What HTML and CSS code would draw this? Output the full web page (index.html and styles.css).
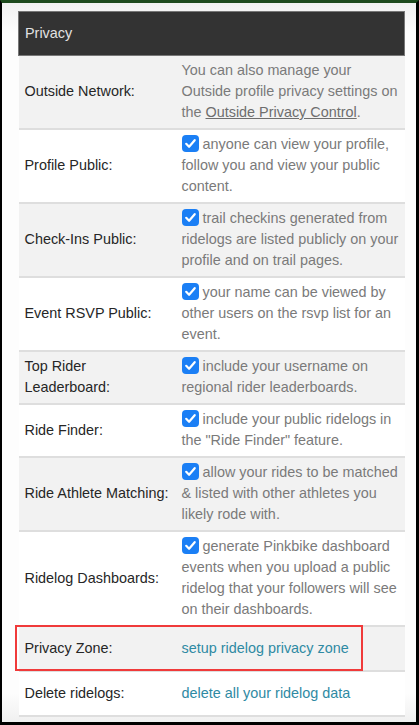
FILE: index.html
```html
<!DOCTYPE html>
<html lang="en">
<head>
  <meta charset="UTF-8" />
  <meta name="viewport" content="width=device-width, initial-scale=1.0"/>
  <title>Privacy settings</title>
  <link rel="stylesheet" href="styles.css">
</head>
<body>

  <div class="frame">
    <table class="privacy">
      <colgroup>
        <col class="col-label">
        <col>
      </colgroup>
      <thead>
        <tr>
          <th colspan="2">Privacy</th>
        </tr>
      </thead>
      <tbody>
        <tr>
          <td class="label">Outside Network:</td>
          <td class="value">You can also manage your Outside profile privacy settings on the <a href="#" class="plain">Outside Privacy Control</a>.</td>
        </tr>
        <tr>
          <td class="label">Profile Public:</td>
          <td class="value"><span class="check"><svg viewBox="0 0 17 17"><path d="M4.2 8.8l2.9 3 5.6-6.6" /></svg></span> anyone can view your profile, follow you and view your public content.</td>
        </tr>
        <tr>
          <td class="label">Check-Ins Public:</td>
          <td class="value"><span class="check"><svg viewBox="0 0 17 17"><path d="M4.2 8.8l2.9 3 5.6-6.6" /></svg></span> trail checkins generated from ridelogs are listed publicly on your profile and on trail pages.</td>
        </tr>
        <tr>
          <td class="label">Event RSVP Public:</td>
          <td class="value"><span class="check"><svg viewBox="0 0 17 17"><path d="M4.2 8.8l2.9 3 5.6-6.6" /></svg></span> your name can be viewed by other users on the rsvp list for an event.</td>
        </tr>
        <tr>
          <td class="label">Top Rider Leaderboard:</td>
          <td class="value"><span class="check"><svg viewBox="0 0 17 17"><path d="M4.2 8.8l2.9 3 5.6-6.6" /></svg></span> include your username on regional rider leaderboards.</td>
        </tr>
        <tr>
          <td class="label">Ride Finder:</td>
          <td class="value"><span class="check"><svg viewBox="0 0 17 17"><path d="M4.2 8.8l2.9 3 5.6-6.6" /></svg></span> include your public ridelogs in the "Ride Finder" feature.</td>
        </tr>
        <tr>
          <td class="label">Ride Athlete Matching:</td>
          <td class="value"><span class="check"><svg viewBox="0 0 17 17"><path d="M4.2 8.8l2.9 3 5.6-6.6" /></svg></span> allow your rides to be matched &amp; listed with other athletes you likely rode with.</td>
        </tr>
        <tr>
          <td class="label">Ridelog Dashboards:</td>
          <td class="value"><span class="check"><svg viewBox="0 0 17 17"><path d="M4.2 8.8l2.9 3 5.6-6.6" /></svg></span> generate Pinkbike dashboard events when you upload a public ridelog that your followers will see on their dashboards.</td>
        </tr>
        <tr class="single highlight">
          <td class="label">Privacy Zone:</td>
          <td class="value"><a href="#">setup ridelog privacy zone</a></td>
        </tr>
        <tr class="single">
          <td class="label">Delete ridelogs:</td>
          <td class="value"><a href="#">delete all your ridelog data</a></td>
        </tr>
      </tbody>
    </table>
  </div>

</body>
</html>
```

FILE: styles.css
```css
* {
  margin: 0;
  padding: 0;
  box-sizing: border-box;
}

body {
  font-family: "Liberation Sans", Arial, sans-serif;
  background: #000;
  overflow: hidden;
}

.frame {
  height: 725px;
  border-top: 3px solid #1d4a1d;
  border-left: 2px solid #000;
  border-right: 3px solid #000;
  border-bottom: 3px solid #000;
  background: linear-gradient(to bottom, #f1f1f1 0, #fdfdfd 30px, #fdfdfd 690px, #f0f0f0 100%);
  padding: 8px 12px 0 16px;
}

.privacy {
  width: 387px;
  border-collapse: collapse;
  table-layout: fixed;
  font-size: 14.4px;
  line-height: 21px;
}

.col-label {
  width: 157px;
}

.privacy th {
  background: #333;
  color: #e2e2e2;
  font-weight: normal;
  text-align: left;
  height: 44px;
  padding: 0 6px;
  border: 1px solid #777;
}

.privacy td {
  vertical-align: middle;
  padding: 4px 6px 5px 6px;
  border-bottom: 2px solid #dedede;
}

.privacy tbody tr:nth-child(odd) td {
  background: #f2f2f2;
}

.privacy tbody tr:nth-child(even) td {
  background: #fff;
}

.privacy tr.single td {
  height: 45px;
}

.privacy td.label {
  padding-right: 2px;
  color: #262626;
  position: relative;
}

.value {
  color: #7a7a7a;
}

.value a {
  color: #2f8aa3;
  text-decoration: none;
}

.value a.plain {
  color: #6e6e6e;
  text-decoration: underline;
}

.check {
  display: inline-block;
  width: 17px;
  height: 17px;
  background: #1b7ff5;
  border-radius: 4px;
  vertical-align: -3px;
}

.check svg {
  display: block;
  width: 17px;
  height: 17px;
  fill: none;
  stroke: #fff;
  stroke-width: 2.2;
  stroke-linecap: round;
  stroke-linejoin: round;
}

/* red highlight box over the privacy zone row */
.privacy tr.highlight td.label::after {
  content: "";
  position: absolute;
  top: -2px;
  bottom: -1px;
  left: -4px;
  width: 344px;
  border: 2px solid #f03a3a;
  pointer-events: none;
}
```
